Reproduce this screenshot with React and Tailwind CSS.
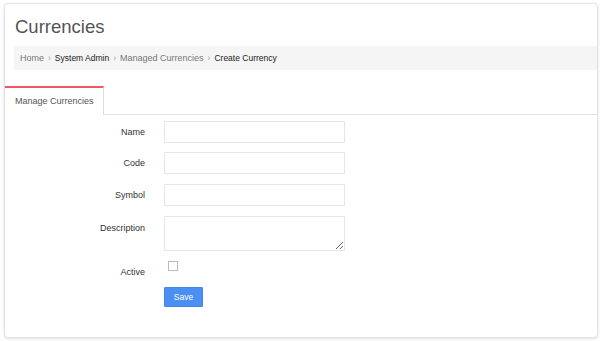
import React from 'react';

const crumbs = [
  { label: 'Home', strong: false },
  { label: 'System Admin', strong: true },
  { label: 'Managed Currencies', strong: false },
  { label: 'Create Currency', strong: true },
];

const Field = ({ label, children, top = false }) => (
  <>
    <div className={`text-right text-[9px] leading-[11px] text-[#333] ${top ? 'self-start pt-[7px]' : 'self-center'}`}>
      {label}
    </div>
    <div>{children}</div>
  </>
);

export default function App() {
  return (
    <div className="min-h-screen bg-white pt-[3px] pl-[4px] font-['Liberation_Sans',Arial,sans-serif]">
      <div className="w-[594px] h-[335px] rounded-[4px] border border-[#e2e2e2] bg-white shadow-[0_1px_3px_rgba(0,0,0,0.12)]">
        {/* Header */}
        <div className="pl-[9px] pt-[11px]">
          <h1 className="text-[18.5px] leading-[23px] pl-[1px] text-[#555]">Currencies</h1>
          <div className="mt-[8px] h-[24px] bg-[#f5f5f5] pl-[6px] flex items-center">
            <div className="flex items-baseline leading-[11px]">
              {crumbs.map((c, i) => (
                <React.Fragment key={c.label}>
                  {i > 0 && <span className="mx-[4px] text-[#999] text-[8.5px]">›</span>}
                  <span className={c.strong ? 'text-[#222] text-[8.5px]' : 'text-[#777] text-[9px]'}>{c.label}</span>
                </React.Fragment>
              ))}
            </div>
          </div>
        </div>

        {/* Tabs */}
        <div className="mt-[16px] flex">
          <div className="w-[99px] h-[29px] border-t-2 border-t-[#ee5763] border-r border-r-[#dddddd] bg-white pl-[10px] flex items-center text-[9px] text-[#555]">
            Manage Currencies
          </div>
          <div className="flex-1 border-b border-[#e2e2e2]" />
        </div>

        {/* Form */}
        <div className="mt-[6px] grid grid-cols-[140px_181px] gap-x-[19px]">
          <Field label="Name">
            <input className="block w-[181px] h-[22px] border border-[#e6e6e6] outline-none" />
          </Field>
          <div className="col-span-2 h-[9px]" />
          <Field label="Code">
            <input className="block w-[181px] h-[22px] border border-[#e6e6e6] outline-none" />
          </Field>
          <div className="col-span-2 h-[10px]" />
          <Field label="Symbol">
            <input className="block w-[181px] h-[22px] border border-[#e6e6e6] outline-none" />
          </Field>
          <div className="col-span-2 h-[10px]" />
          <Field label="Description" top>
            <textarea className="block w-[181px] h-[35px] border border-[#e6e6e6] outline-none resize-y" />
          </Field>
          <div className="col-span-2 h-[10px]" />
          <div className="text-right text-[9px] leading-[11px] text-[#333] pt-[6px]">Active</div>
          <div className="h-[22px]">
            <div className="ml-[4px] w-[10px] h-[10px] border border-[#bcbcbc] bg-white" />
          </div>
          <div className="col-span-2 h-[4px]" />
          <div />
          <div>
            <button className="block w-[39px] h-[20px] bg-[#4c8ff3] border border-[#3f85ea] rounded-[1px] text-white text-[8.5px] leading-[18px]">
              Save
            </button>
          </div>
        </div>
      </div>
    </div>
  );
}
